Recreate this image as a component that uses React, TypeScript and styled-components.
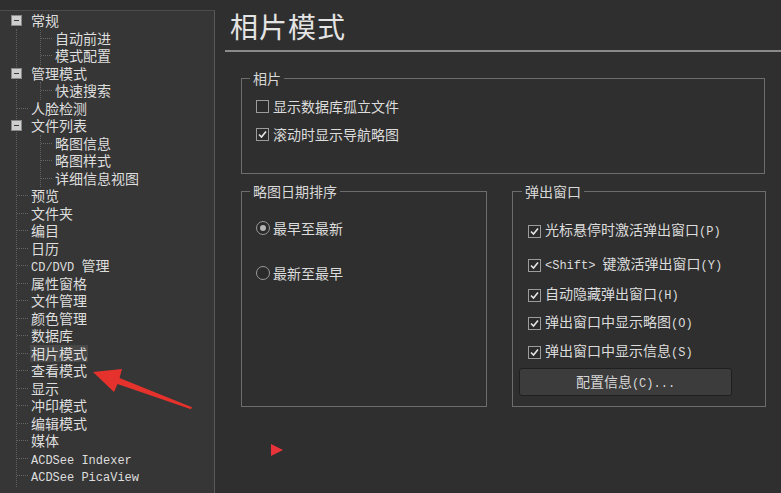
import { ReactNode } from 'react';
import styled, { createGlobalStyle } from 'styled-components';

const GlobalStyle = createGlobalStyle`
	html, body {
		margin: 0;
		padding: 0;
		background: #2f2f2f;
		overflow: hidden;
	}
	body {
		font-family: "Noto Sans CJK SC", "Noto Sans", sans-serif;
		color: #dcdcdc;
	}
`;

type TreeItem = {
	label: string;
	children?: string[];
	selected?: boolean;
};

const treeItems: TreeItem[] = [
	{ label: '常规', children: ['自动前进', '模式配置'] },
	{ label: '管理模式', children: ['快速搜索'] },
	{ label: '人脸检测' },
	{ label: '文件列表', children: ['略图信息', '略图样式', '详细信息视图'] },
	{ label: '预览' },
	{ label: '文件夹' },
	{ label: '编目' },
	{ label: '日历' },
	{ label: 'CD/DVD 管理' },
	{ label: '属性窗格' },
	{ label: '文件管理' },
	{ label: '颜色管理' },
	{ label: '数据库' },
	{ label: '相片模式', selected: true },
	{ label: '查看模式' },
	{ label: '显示' },
	{ label: '冲印模式' },
	{ label: '编辑模式' },
	{ label: '媒体' },
	{ label: 'ACDSee Indexer' },
	{ label: 'ACDSee PicaView' },
];

// popup options, top margin = distance from previous row
const popupOptions = [
	{ label: '光标悬停时激活弹出窗口(P)', mt: 22 },
	{ label: '<Shift> 键激活弹出窗口(Y)', mt: 16 },
	{ label: '自动隐藏弹出窗口(H)', mt: 12 },
	{ label: '弹出窗口中显示略图(O)', mt: 10 },
	{ label: '弹出窗口中显示信息(S)', mt: 11 },
];

const Latin = styled.span`
	font-family: "Liberation Mono", "DejaVu Sans Mono", monospace;
	font-size: 12px;
	white-space: pre;
`;

const Text = styled.span`
	line-height: 17px;
`;

// wrap ascii runs in the mono face, like the half-width SimSun glyphs
const renderText = (text: string): ReactNode => (
	<Text>
		{text
			.split(/([\x20-\x7e]+)/)
			.filter((part) => part !== '')
			.map((part, i) =>
				/^[\x20-\x7e]+$/.test(part) ? <Latin key={i}>{part}</Latin> : part,
			)}
	</Text>
);

const Frame = styled.div`
	position: relative;
	display: flex;
	height: 493px;
	width: 781px;
	overflow: hidden;
`;

const Sidebar = styled.div`
	width: 214px;
	flex-shrink: 0;
	margin-top: 10px;
	background: #363636;
	border-top: 1px solid #4c4c4c;
	border-right: 1px solid #5a5a5a;
`;

const Tree = styled.div`
	position: relative;
	padding-top: 1px;
	font-size: 14px;

	&::before {
		content: '';
		position: absolute;
		left: 16px;
		top: 18px;
		height: 458px;
		border-left: 1px dotted #5e5e5e;
	}
`;

const Row = styled.div<{ $indent: number }>`
	position: relative;
	display: flex;
	align-items: center;
	height: 17.5px;
	padding-left: ${(p) => p.$indent}px;
	white-space: nowrap;
`;

const Toggle = styled.span`
	position: relative;
	width: 9px;
	height: 9px;
	margin-right: 9px;
	background: #cfcfcf;
	border: 1px solid #8a8a8a;

	&::after {
		content: '';
		position: absolute;
		left: 2px;
		right: 2px;
		top: 4px;
		height: 1px;
		background: #3a3a3a;
	}
`;

const Branch = styled.span<{ $offset: number }>`
	width: 11px;
	margin-left: ${(p) => p.$offset}px;
	margin-right: 3px;
	border-top: 1px dotted #666;
`;

const ChildGroup = styled.div`
	margin-left: 40px;
	border-left: 1px dotted #5e5e5e;
`;

const Label = styled.span<{ $selected?: boolean }>`
	display: inline-block;
	height: 17px;
	line-height: 17px;
	padding: 0 1px;
	margin-left: -1px;
	color: #dedede;
	background: ${(p) => (p.$selected ? '#474747' : 'transparent')};
`;

const Main = styled.div`
	flex: 1;
	display: flex;
	flex-direction: column;
	position: relative;
`;

const Title = styled.h1`
	margin: 8px 0 0 15px;
	font-size: 28px;
	line-height: 36px;
	font-weight: 400;
	color: #e4e4e4;
	letter-spacing: 1px;
`;

const TitleRule = styled.div`
	margin: 6px 0 0 10px;
	height: 2px;
	background: #8a8a8a;
`;

const Group = styled.fieldset<{ $width: number; $height: number }>`
	box-sizing: border-box;
	width: ${(p) => p.$width}px;
	height: ${(p) => p.$height}px;
	margin: 0;
	padding: 0 0 0 14px;
	border: 1px solid #6c6c6c;
	font-size: 14px;
`;

const Legend = styled.legend`
	padding: 0 3px;
	margin-left: -6px;
	font-size: 14px;
	line-height: 18px;
	color: #d8d8d8;
`;

const PhotoGroup = styled(Group)`
	margin: 17px 0 0 26px;
`;

const BottomRow = styled.div`
	display: flex;
	gap: 25px;
	margin: 8px 0 0 26px;
`;

const Option = styled.label<{ $mt: number }>`
	display: flex;
	align-items: center;
	height: 18px;
	margin-top: ${(p) => p.$mt}px;
	color: #dcdcdc;
	white-space: nowrap;
`;

const Box = styled.span`
	display: inline-flex;
	align-items: center;
	justify-content: center;
	box-sizing: border-box;
	width: 13px;
	height: 13px;
	margin-right: 4px;
	border: 1px solid #9c9c9c;
	background: #2b2b2b;
`;

const Radio = styled.span<{ $on?: boolean }>`
	display: inline-flex;
	align-items: center;
	justify-content: center;
	box-sizing: border-box;
	width: 14px;
	height: 14px;
	margin-right: 3px;
	border-radius: 50%;
	border: 1px solid #9a9a9a;
	background: #2b2b2b;

	&::after {
		content: '';
		width: 6px;
		height: 6px;
		border-radius: 50%;
		background: ${(p) => (p.$on ? '#b4b4b4' : 'transparent')};
	}
`;

const PopupGroup = styled(Group)`
	padding-left: 15px;
`;

const ConfigButton = styled.button`
	display: block;
	width: 213px;
	height: 28px;
	margin: 7px 0 0 -9px;
	border: 1px solid #1f1f1f;
	border-radius: 3px;
	background: #3c3c3c;
	color: #d6d6d6;
	font-family: "Noto Sans CJK SC", sans-serif;
	font-size: 14px;
	padding: 0;
`;

const Marker = styled.svg`
	position: absolute;
	left: 55px;
	top: 443px;
`;

const Arrow = styled.svg`
	position: absolute;
	left: 0;
	top: 0;
	pointer-events: none;
`;

const CheckIcon = () => (
	<svg width="9" height="9" viewBox="0 0 9 9">
		<path d="M1 4.5 L3.5 7 L8 1.5" fill="none" stroke="#e6e6e6" strokeWidth="1.6" />
	</svg>
);

const Checkbox = ({ checked }: { checked?: boolean }) => (
	<Box>{checked && <CheckIcon />}</Box>
);

export default function App() {
	return (
		<>
			<GlobalStyle />
			<Frame>
				<Sidebar>
					<Tree>
						{treeItems.map((item) => (
							<div key={item.label}>
								<Row $indent={11}>
									{item.children ? <Toggle /> : <Branch $offset={6} />}
									<Label $selected={item.selected}>{renderText(item.label)}</Label>
								</Row>
								{item.children && (
									<ChildGroup>
										{item.children.map((child) => (
											<Row key={child} $indent={0}>
												<Branch $offset={0} />
												<Label>{child}</Label>
											</Row>
										))}
									</ChildGroup>
								)}
							</div>
						))}
					</Tree>
				</Sidebar>
				<Main>
					<Title>相片模式</Title>
					<TitleRule />
					<PhotoGroup $width={524} $height={105}>
						<Legend>相片</Legend>
						<Option $mt={10}>
							<Checkbox />
							<Text>显示数据库孤立文件</Text>
						</Option>
						<Option $mt={10}>
							<Checkbox checked />
							<Text>滚动时显示导航略图</Text>
						</Option>
					</PhotoGroup>
					<BottomRow>
						<Group $width={246} $height={225}>
							<Legend>略图日期排序</Legend>
							<Option $mt={19}>
								<Radio $on />
								<Text>最早至最新</Text>
							</Option>
							<Option $mt={27}>
								<Radio />
								<Text>最新至最早</Text>
							</Option>
						</Group>
						<PopupGroup $width={254} $height={225}>
							<Legend>弹出窗口</Legend>
							{popupOptions.map((opt) => (
								<Option key={opt.label} $mt={opt.mt}>
									<Checkbox checked />
									{renderText(opt.label)}
								</Option>
							))}
							<ConfigButton type="button">{renderText('配置信息(C)...')}</ConfigButton>
						</PopupGroup>
					</BottomRow>
					<Marker width="14" height="14" viewBox="0 0 14 14">
						<polygon points="1,1 13,7 1,13" fill="#e8333a" />
					</Marker>
				</Main>
				<Arrow width="781" height="493" viewBox="0 0 781 493">
					<polygon
						points="93,372 122,369 119.5,378 192,407.2 191,409.2 117.5,384 114,392"
						fill="#e6322c"
					/>
				</Arrow>
			</Frame>
		</>
	);
}
